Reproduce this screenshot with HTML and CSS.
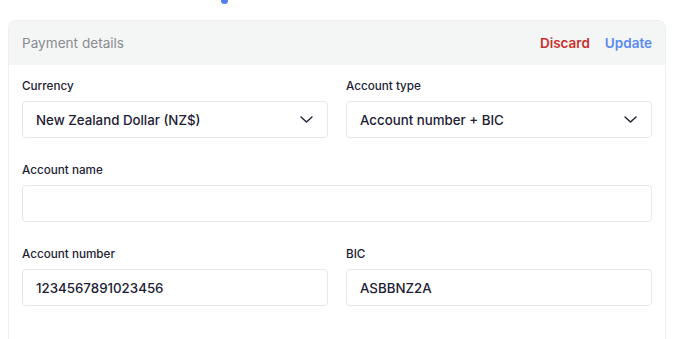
FILE: index.html
```html
<!DOCTYPE html>
<html lang="en">
  <head>
    <meta charset="UTF-8" />
    <meta name="viewport" content="width=device-width, initial-scale=1.0" />
    <title>Payment details</title>
    <link rel="stylesheet" href="styles.css">
  </head>
  <body>
    <div class="top-marker"></div>

    <div class="card">
      <div class="card-header">
        <h2>Payment details</h2>
        <div class="actions">
          <button class="discard">Discard</button>
          <button class="update">Update</button>
        </div>
      </div>

      <div class="card-body">
        <div class="row">
          <div class="field">
            <label>Currency</label>
            <div class="select">
              <span>New Zealand Dollar (NZ$)</span>
              <svg class="chevron" width="13" height="7" viewBox="0 0 13 7">
                <path d="M1 1l5.5 5 5.5-5" fill="none" stroke="#1c2134" stroke-width="1.4" stroke-linecap="round" stroke-linejoin="round" />
              </svg>
            </div>
          </div>
          <div class="field">
            <label>Account type</label>
            <div class="select">
              <span>Account number + BIC</span>
              <svg class="chevron" width="13" height="7" viewBox="0 0 13 7">
                <path d="M1 1l5.5 5 5.5-5" fill="none" stroke="#1c2134" stroke-width="1.4" stroke-linecap="round" stroke-linejoin="round" />
              </svg>
            </div>
          </div>
        </div>

        <div class="row single">
          <div class="field">
            <label>Account name</label>
            <div class="input"></div>
          </div>
        </div>

        <div class="row">
          <div class="field">
            <label>Account number</label>
            <div class="input">1234567891023456</div>
          </div>
          <div class="field">
            <label>BIC</label>
            <div class="input">ASBBNZ2A</div>
          </div>
        </div>
      </div>
    </div>
  </body>
</html>
```

FILE: styles.css
```css
body {
  font-family: Inter, 'Noto Sans', sans-serif;
  margin: 0;
  padding: 0;
  background-color: white;
  color: #1c2134;
}

.top-marker {
  position: absolute;
  top: -3px;
  left: 221px;
  width: 7px;
  height: 7px;
  border-radius: 50%;
  background-color: #4f7ff0;
}

.card {
  margin: 20px 0 0 8px;
  width: 658px;
  height: 319px;
  box-sizing: border-box;
  border: 1px solid #efefef;
  border-bottom: none;
  border-radius: 8px 8px 0 0;
  overflow: hidden;
}

.card-header {
  background-color: #f4f5f5;
  height: 44px;
  display: flex;
  align-items: center;
  justify-content: space-between;
  padding: 0 13px;
}

.card-header h2 {
  margin: 0;
  font-size: 13.6px;
  font-weight: 400;
  color: #8a8c90;
}

.actions {
  display: flex;
  gap: 15px;
}

.actions button {
  background: none;
  border: none;
  padding: 0;
  font-family: inherit;
  font-size: 13.5px;
  font-weight: 600;
  cursor: pointer;
}

.discard {
  color: #c9302c;
}

.update {
  color: #5b8af0;
}

.card-body {
  padding: 12px 13px 0;
  display: flex;
  flex-direction: column;
  gap: 23px;
}

.row {
  display: grid;
  grid-template-columns: 1fr 1fr;
  gap: 18px;
}

.row.single {
  grid-template-columns: 1fr;
}

.field label {
  display: block;
  font-size: 11.7px;
  font-weight: 500;
  line-height: 18px;
  margin-bottom: 6px;
  color: #1c2134;
}

.select,
.input {
  height: 37px;
  box-sizing: border-box;
  border: 1px solid #e8e8e8;
  border-radius: 4px;
  padding: 0 14px 0 13px;
  display: flex;
  align-items: center;
  justify-content: space-between;
  font-size: 13.3px;
  font-weight: 500;
  color: #1c2134;
}
```
